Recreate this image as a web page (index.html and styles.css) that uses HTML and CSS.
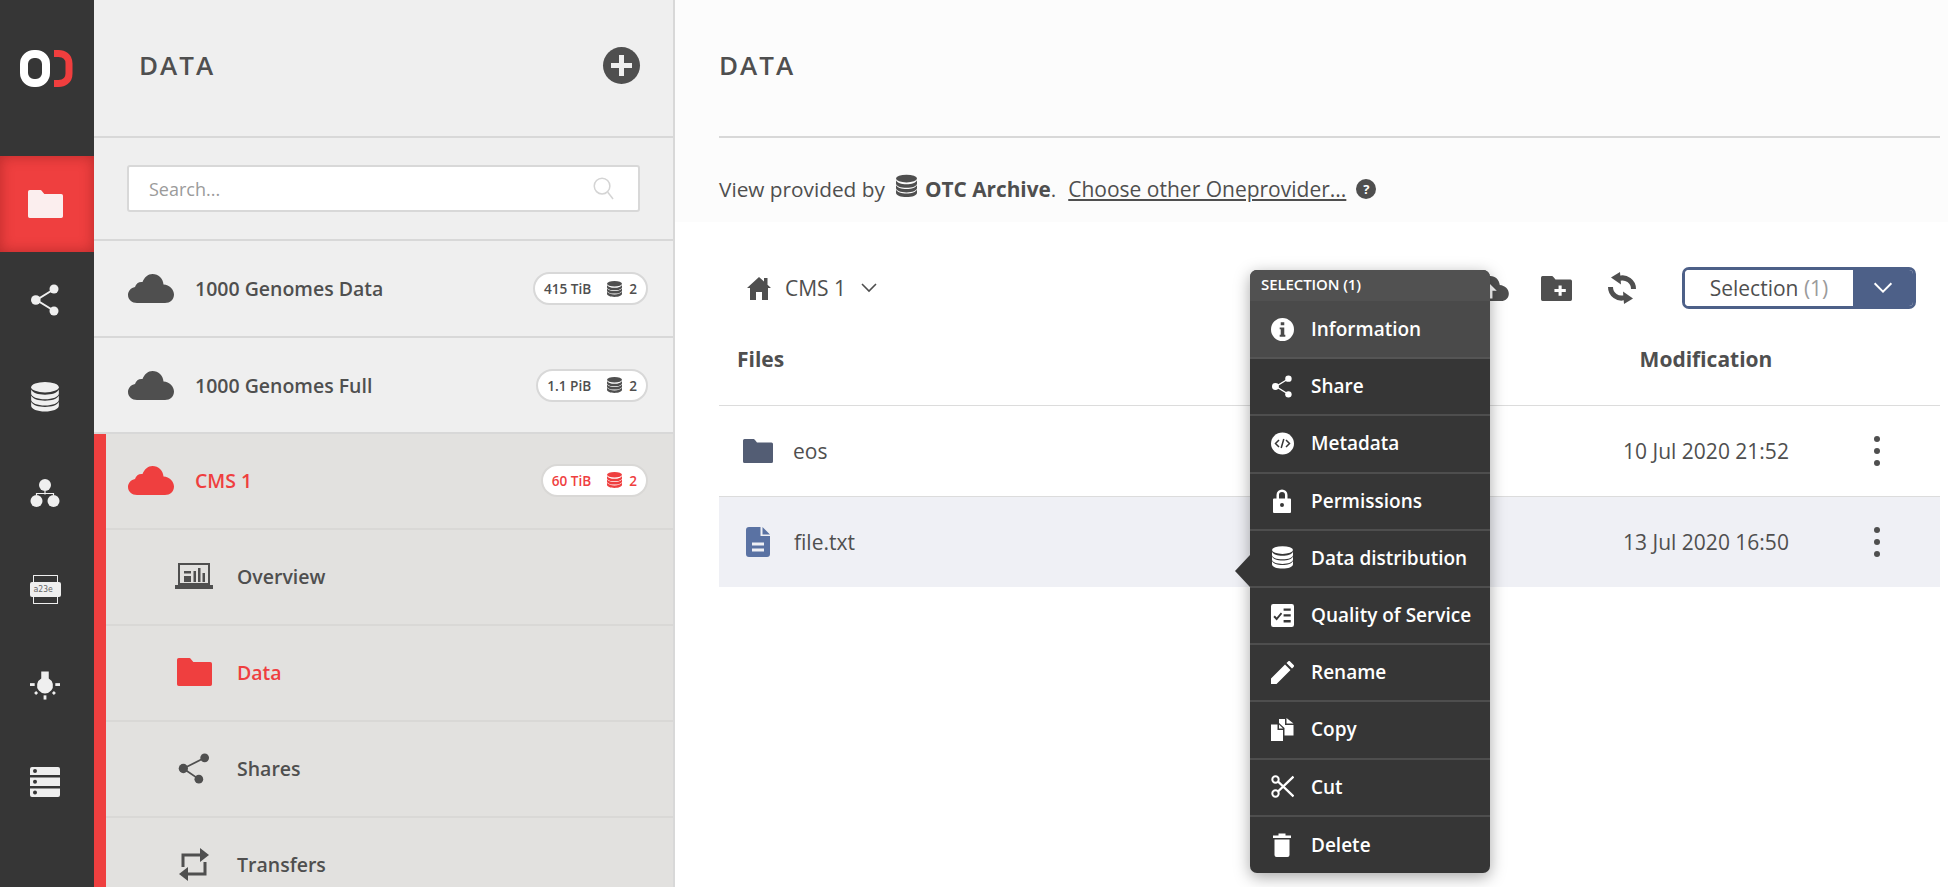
FILE: index.html
```html
<!DOCTYPE html>
<html lang="en">
  <head>
    <meta charset="UTF-8" />
    <meta name="viewport" content="width=device-width, initial-scale=1.0" />
    <title>Data</title>
    <link rel="stylesheet" href="styles.css">
  </head>
  <body>
    <!-- icon sprite -->
    <svg class="sprite" xmlns="http://www.w3.org/2000/svg">
      <symbol id="i-folder" viewBox="0 0 30 24">
        <path d="M1.5 0H10c1 0 1.600.4 2.200 1.200L14 3.400h14.500A1.500 1.500 0 0 1 30 4.900V22.500A1.500 1.500 0 0 1 28.500 24H1.500A1.500 1.500 0 0 1 0 22.500V1.500A1.500 1.500 0 0 1 1.500 0Z"/>
      </symbol>
      <symbol id="i-share" viewBox="0 0 28 32">
        <path d="M22.500 5.500 5.500 16l17 10.500" fill="none" stroke="currentColor" stroke-width="2"/>
        <circle cx="23" cy="5" r="4.500"/><circle cx="4.800" cy="16" r="4.800"/><circle cx="23" cy="27" r="4.500"/>
      </symbol>
      <symbol id="i-share-tilted" viewBox="0 0 32 32">
        <path d="M27 5 5 16l16 11" fill="none" stroke="currentColor" stroke-width="1.800"/>
        <circle cx="27" cy="5" r="4.500"/><circle cx="5" cy="16" r="4.800"/><circle cx="21" cy="27" r="4.500"/>
      </symbol>
      <symbol id="i-db" viewBox="0 0 24 26">
        <ellipse cx="12" cy="4.500" rx="12" ry="4.500"/>
        <path d="M0 6.500c1.500 3 6 4.500 12 4.500s10.500-1.500 12-4.500V10c0 3-5.500 5-12 5S0 13 0 10Z"/>
        <path d="M0 11.800c1.500 3 6 4.500 12 4.500s10.500-1.500 12-4.500v3.500c0 3-5.500 5-12 5s-12-2-12-5Z"/>
        <path d="M0 17.100c1.500 3 6 4.500 12 4.500s10.500-1.500 12-4.500v3.500c0 3-5.500 5-12 5s-12-2-12-5Z"/>
      </symbol>
      <symbol id="i-cluster" viewBox="0 0 30 28">
        <circle cx="15" cy="6" r="6"/><circle cx="6.500" cy="22" r="6"/><circle cx="23.500" cy="22" r="6"/>
        <path d="M15 12v3.500M6.500 16v-1.500h17V16" fill="none" stroke="currentColor" stroke-width="1.200"/>
      </symbol>
      <symbol id="i-bulb" viewBox="0 0 32 30">
        <path d="M12 0h8v7.500a8.500 8.500 0 1 1-8 0Z"/>
        <rect x="0" y="12.500" width="5" height="3"/><rect x="27" y="12.500" width="5" height="3"/>
        <rect x="14.500" y="25.500" width="3" height="4.500"/>
        <rect x="5" y="21.500" width="3" height="3" transform="rotate(45 6.500 23)"/>
        <rect x="24" y="21.500" width="3" height="3" transform="rotate(45 25.500 23)"/>
      </symbol>
      <symbol id="i-servers" viewBox="0 0 30 30">
        <path fill-rule="evenodd" d="M2 0h26a2 2 0 0 1 2 2v6H0V2a2 2 0 0 1 2-2Zm3 2a2 2 0 1 0 0 4 2 2 0 0 0 0-4Z"/>
        <path fill-rule="evenodd" d="M0 10.500h30v8.500H0Zm5 2.200a2 2 0 1 0 0 4 2 2 0 0 0 0-4Z"/>
        <path fill-rule="evenodd" d="M0 21.500h30V28a2 2 0 0 1-2 2H2a2 2 0 0 1-2-2Zm5 2a2 2 0 1 0 0 4 2 2 0 0 0 0-4Z"/>
      </symbol>
      <symbol id="i-cloud" viewBox="0 0 46 29">
        <path d="M9 29C4 29 0 25.500 0 21c0-4 3-7.300 7-8 1-3.500 4-5.500 7.500-5C16.500 3 20 0 24.500 0 30.500 0 35 4.500 35.500 10.500 41.500 11 46 15.500 46 20.500 46 25.500 42 29 37 29Z"/>
      </symbol>
      <symbol id="i-overview" viewBox="0 0 38 26">
        <path fill-rule="evenodd" d="M3 0h32v22H3Zm2 2v18h28V2Z"/>
        <rect x="0" y="22" width="38" height="4"/>
        <rect x="9" y="8" width="7" height="2.500"/><rect x="9" y="13" width="7" height="6"/>
        <rect x="18.500" y="8" width="2.500" height="11"/><rect x="23" y="5" width="2.500" height="14"/><rect x="27.500" y="10" width="2.500" height="9"/>
      </symbol>
      <symbol id="i-transfers" viewBox="0 0 32 35">
        <path d="M5 20V8h18M27 15v12H9" fill="none" stroke="currentColor" stroke-width="3"/>
        <path d="M22 1l9 7-9 7Z"/>
        <path d="M10 20l-9 7 9 7Z"/>
      </symbol>
      <symbol id="i-info" viewBox="0 0 22 22">
        <path fill-rule="evenodd" d="M11 0a11 11 0 1 1 0 22 11 11 0 0 1 0-22Zm-1.700 4v3h3.400V4Zm-1 5v1.800h1V16h-1v2h5.400v-2h-1V9Z"/>
      </symbol>
      <symbol id="i-meta" viewBox="0 0 23 22">
        <ellipse cx="11.500" cy="11" rx="11.500" ry="11"/>
        <path d="M8 7.500 4.500 11 8 14.500M15 7.500l3.500 3.500-3.500 3.500M12.800 6.500 10.200 15.500" fill="none" stroke="#363636" stroke-width="1.500"/>
      </symbol>
      <symbol id="i-lock" viewBox="0 0 18 24">
        <path fill-rule="evenodd" d="M3.500 9.500V6a5.500 5.500 0 0 1 11 0v3.500H17a1 1 0 0 1 1 1V23a1 1 0 0 1-1 1H1a1 1 0 0 1-1-1V10.500a1 1 0 0 1 1-1ZM6 9.500h6V6a3 3 0 0 0-6 0Zm3 4.500a2 2 0 1 0 0 4 2 2 0 0 0 0-4Z"/>
      </symbol>
      <symbol id="i-qos" viewBox="0 0 21 21">
        <path fill-rule="evenodd" d="M2 0h17a2 2 0 0 1 2 2v17a2 2 0 0 1-2 2H2a2 2 0 0 1-2-2V2a2 2 0 0 1 2-2Zm9.500 4v2.200H18V4Zm0 5.300v2.200H18V9.300Zm0 5.300v2.200H18v-2.200ZM3.500 10.500l-1.300 1.300 3 3.200 5-6L9 7.800l-3.800 4.500Z"/>
      </symbol>
      <symbol id="i-pencil" viewBox="0 0 23 23">
        <path d="M0 23v-5.500L14 3.500 19.500 9 5.500 23ZM15.500 2l1.600-1.600a1.400 1.400 0 0 1 2 0l3.500 3.500a1.400 1.400 0 0 1 0 2L21 7.500Z"/>
      </symbol>
      <symbol id="i-copy" viewBox="0 0 23 23">
        <path d="M0 6.500h6.500V12H12v11H0ZM8 6.500l4 4H8Z"/>
        <path d="M8 1h6v6h8.500v10.500H13.500V10L8 5ZM15.500 0l7 5.500h-7Z"/>
      </symbol>
      <symbol id="i-cut" viewBox="0 0 23 23">
        <g fill="none" stroke="currentColor" stroke-width="2">
          <circle cx="4.500" cy="4.500" r="3.200"/><circle cx="4.500" cy="18.500" r="3.200"/>
          <path d="M7 6.500 22.500 21.500M7 16.500 22.500 1.500" stroke-width="2.400"/>
        </g>
      </symbol>
      <symbol id="i-trash" viewBox="0 0 18 24">
        <path d="M0 2.500h5.500V0.500h7v2H18V5H0ZM1.500 6.500h15V22a2 2 0 0 1-2 2h-11a2 2 0 0 1-2-2Z"/>
      </symbol>
      <symbol id="i-home" viewBox="0 0 24 23">
        <path d="M12 0l5 4.500V1h3.500v6.700L24 11h-3v12h-6v-8H9v8H3V11H0Z"/>
      </symbol>
      <symbol id="i-upload" viewBox="0 0 46 29">
        <path d="M9 29C4 29 0 25.500 0 21c0-4 3-7.300 7-8 1-3.500 4-5.500 7.500-5C16.500 3 20 0 24.500 0 30.500 0 35 4.500 35.500 10.500 41.500 11 46 15.500 46 20.500 46 25.500 42 29 37 29Z"/>
        <path d="M23 8l9 9h-5v9h-8v-9h-5Z" fill="#fff"/>
      </symbol>
      <symbol id="i-folder-plus" viewBox="0 0 30 24">
        <path fill-rule="evenodd" d="M1.500 0H10c1 0 1.600.4 2.200 1.200L14 3.400h14.500A1.500 1.500 0 0 1 30 4.900V22.500A1.500 1.500 0 0 1 28.500 24H1.500A1.500 1.500 0 0 1 0 22.500V1.500A1.500 1.500 0 0 1 1.500 0ZM17 9v3.500h-4v2.800h4V19h3v-3.700h4v-2.800h-4V9Z"/>
      </symbol>
      <symbol id="i-sync" viewBox="0 0 32 32">
        <path d="M13 6.500A11 11 0 0 1 27.500 17" fill="none" stroke="currentColor" stroke-width="5"/>
        <path d="M14 0 5 5.500l10 7Z"/>
        <path d="M19 25.500A11 11 0 0 1 4.500 15" fill="none" stroke="currentColor" stroke-width="5"/>
        <path d="M18 32l9-5.500-10-7Z"/>
      </symbol>
      <symbol id="i-file" viewBox="0 0 24 30">
        <path fill-rule="evenodd" d="M3 0h11.500v9H24v18a3 3 0 0 1-3 3H3a3 3 0 0 1-3-3V3a3 3 0 0 1 3-3Zm3 15.500v3h12v-3Zm0 6v3h12v-3ZM16.500 0 24 7.500h-7.500Z"/>
      </symbol>
    </svg>

    <div class="app">
      <nav class="rail">
        <div class="rail-logo">
          <svg class="logo" viewBox="0 0 53 37">
            <rect x="4" y="4" width="22" height="29" rx="10" fill="none" stroke="#fff" stroke-width="8"/>
            <path d="M34 3.500h4.500c5 0 10.500 2.500 10.500 10v10c0 7.500-5.500 10-10.500 10H34" fill="none" stroke="#f03e3e" stroke-width="7"/>
          </svg>
        </div>
        <a class="rail-item active"><svg class="rail-icon folder"><use href="#i-folder"/></svg></a>
        <a class="rail-item"><svg class="rail-icon share"><use href="#i-share"/></svg></a>
        <a class="rail-item"><svg class="rail-icon db"><use href="#i-db"/></svg></a>
        <a class="rail-item"><svg class="rail-icon cluster"><use href="#i-cluster"/></svg></a>
        <a class="rail-item">
          <div class="token">
            <span class="token-clip"></span>
            <span class="token-body">a23e</span>
            <span class="token-clip bottom"></span>
          </div>
        </a>
        <a class="rail-item"><svg class="rail-icon bulb"><use href="#i-bulb"/></svg></a>
        <a class="rail-item"><svg class="rail-icon servers"><use href="#i-servers"/></svg></a>
      </nav>

      <aside class="sidebar">
        <header class="side-head">
          <h1 class="heading">DATA</h1>
          <span class="add-btn"></span>
        </header>
        <div class="search-row">
          <div class="search-box">
            <span>Search...</span>
            <svg class="search-icon" viewBox="0 0 22 24"><circle cx="9.500" cy="9.500" r="8.200"/><path d="m15.500 16 5.500 7"/></svg>
          </div>
        </div>
        <div class="space-row">
          <svg class="cloud"><use href="#i-cloud"/></svg>
          <span class="space-name">1000 Genomes Data</span>
          <span class="pill"><span>415 TiB</span><svg class="pill-db"><use href="#i-db"/></svg><span>2</span></span>
        </div>
        <div class="space-row">
          <svg class="cloud"><use href="#i-cloud"/></svg>
          <span class="space-name">1000 Genomes Full</span>
          <span class="pill"><span>1.1 PiB</span><svg class="pill-db"><use href="#i-db"/></svg><span>2</span></span>
        </div>
        <div class="space-open">
          <div class="space-row current">
            <svg class="cloud"><use href="#i-cloud"/></svg>
            <span class="space-name">CMS 1</span>
            <span class="pill"><span>60 TiB</span><svg class="pill-db"><use href="#i-db"/></svg><span>2</span></span>
          </div>
          <div class="sub-row"><span class="sub-cell"><svg class="sub-icon overview"><use href="#i-overview"/></svg></span>Overview</div>
          <div class="sub-row current"><span class="sub-cell"><svg class="sub-icon data"><use href="#i-folder"/></svg></span>Data</div>
          <div class="sub-row"><span class="sub-cell"><svg class="sub-icon shares"><use href="#i-share-tilted"/></svg></span>Shares</div>
          <div class="sub-row"><span class="sub-cell"><svg class="sub-icon transfers"><use href="#i-transfers"/></svg></span>Transfers</div>
        </div>
      </aside>

      <main class="content">
        <section class="content-top">
          <h2 class="heading title-row">DATA</h2>
          <p class="provider">
            <span>View provided by</span>
            <svg class="provider-db"><use href="#i-db"/></svg>
            <span><b>OTC Archive</b>.</span>
            <a class="provider-link">Choose other Oneprovider...</a>
            <span class="help">?</span>
          </p>
        </section>

        <section class="browser">
          <div class="toolbar">
            <div class="crumb">
              <svg class="home"><use href="#i-home"/></svg>
              <span>CMS 1</span>
              <svg class="chevron" viewBox="0 0 16 10"><path d="m1 1 7 7 7-7"/></svg>
            </div>
            <div class="tools">
              <svg class="tool upload"><use href="#i-upload"/></svg>
              <svg class="tool new-dir"><use href="#i-folder-plus"/></svg>
              <svg class="tool sync"><use href="#i-sync"/></svg>
              <div class="select-btn">
                <span class="select-label">Selection <em>(1)</em></span>
                <span class="select-arrow"><svg class="chevron light" viewBox="0 0 16 10"><path d="m1 1 7 7 7-7"/></svg></span>
              </div>
            </div>
          </div>

          <div class="file-row head">
            <span class="file-name">Files</span>
            <span class="file-date">Modification</span>
            <span></span>
          </div>
          <div class="file-row">
            <span class="file-name"><svg class="file-icon dir"><use href="#i-folder"/></svg>eos</span>
            <span class="file-date">10 Jul 2020 21:52</span>
            <span class="dots"><i></i><i></i><i></i></span>
          </div>
          <div class="file-row picked">
            <span class="file-name"><svg class="file-icon doc"><use href="#i-file"/></svg>file.txt</span>
            <span class="file-date">13 Jul 2020 16:50</span>
            <span class="dots"><i></i><i></i><i></i></span>
          </div>
        </section>
      </main>
    </div>

    <!-- selection context menu -->
    <div class="menu">
      <div class="menu-title">SELECTION (1)</div>
      <div class="menu-item hover"><span class="menu-cell"><svg class="mi w22"><use href="#i-info"/></svg></span>Information</div>
      <div class="menu-item"><span class="menu-cell"><svg class="mi share"><use href="#i-share"/></svg></span>Share</div>
      <div class="menu-item"><span class="menu-cell"><svg class="mi w22"><use href="#i-meta"/></svg></span>Metadata</div>
      <div class="menu-item"><span class="menu-cell"><svg class="mi lock"><use href="#i-lock"/></svg></span>Permissions</div>
      <div class="menu-item"><span class="menu-cell"><svg class="mi db"><use href="#i-db"/></svg></span>Data distribution</div>
      <div class="menu-item"><span class="menu-cell"><svg class="mi w22"><use href="#i-qos"/></svg></span>Quality of Service</div>
      <div class="menu-item"><span class="menu-cell"><svg class="mi w22"><use href="#i-pencil"/></svg></span>Rename</div>
      <div class="menu-item"><span class="menu-cell"><svg class="mi w22"><use href="#i-copy"/></svg></span>Copy</div>
      <div class="menu-item"><span class="menu-cell"><svg class="mi w22"><use href="#i-cut"/></svg></span>Cut</div>
      <div class="menu-item"><span class="menu-cell"><svg class="mi lock"><use href="#i-trash"/></svg></span>Delete</div>
    </div>
  </body>
</html>
```

FILE: styles.css
```css
* {
  box-sizing: border-box;
}

body {
  margin: 0;
  height: 887px;
  overflow: hidden;
  font-family: "Open Sans", "Liberation Sans", sans-serif;
  color: #4f4f4f;
  background: #fff;
}

svg {
  fill: currentColor;
}

.sprite {
  display: none;
}

.app {
  display: flex;
  height: 887px;
  overflow: hidden;
}

/* dark icon rail */
.rail {
  flex: 0 0 94px;
  background: #363636;
  color: #efefef;
}

.rail-logo {
  height: 156px;
  padding: 50px 0 0 20px;
}

.logo {
  display: block;
  width: 53px;
  height: 37px;
}

.rail-item {
  display: flex;
  align-items: center;
  justify-content: center;
  height: 96.3px;
  padding-right: 4px;
}

.rail-item.active {
  background: #ef3f3f;
  color: #fbeeee;
  box-shadow: inset 0 0 14px rgba(120, 20, 20, 0.45);
}

.rail-icon.folder { width: 35px; height: 28px; }
.rail-icon.share { width: 28px; height: 32px; }
.rail-icon.db { width: 28px; height: 30px; }
.rail-icon.cluster { width: 30px; height: 28px; }
.rail-icon.bulb { width: 30px; height: 29px; }
.rail-icon.servers { width: 30px; height: 30px; }

.token {
  display: flex;
  flex-direction: column;
  align-items: center;
  width: 31px;
}

.token-clip {
  width: 25px;
  height: 7px;
  border: 1.5px solid #efefef;
  border-bottom: 0;
  border-radius: 1px 1px 0 0;
}

.token-clip.bottom {
  border: 1.5px solid #efefef;
  border-top: 0;
  border-radius: 0 0 1px 1px;
}

.token-body {
  width: 31px;
  height: 15px;
  background: #efefef;
  color: #666;
  border-radius: 2px;
  font: 8px/15px "DejaVu Sans Mono", monospace;
  padding-left: 4px;
}

/* middle column */
.sidebar {
  flex: 0 0 581px;
  background: #efefef;
  border-right: 2px solid #d8d8d8;
}

.heading {
  margin: 0;
  font-size: 26px;
  font-weight: 600;
  letter-spacing: 2px;
  color: #4f4f4f;
}

.side-head {
  display: flex;
  align-items: center;
  justify-content: space-between;
  height: 138px;
  padding: 0 33px 6px 45px;
  border-bottom: 2px solid #d8d8d8;
}

.add-btn {
  position: relative;
  width: 37px;
  height: 37px;
  border-radius: 50%;
  background: #4f4f4f;
}

.add-btn::before,
.add-btn::after {
  content: "";
  position: absolute;
  background: #efefef;
}

.add-btn::before { left: 16px; top: 8px; width: 5px; height: 21px; }
.add-btn::after { left: 8px; top: 16px; width: 21px; height: 5px; }

.search-row {
  height: 103px;
  padding: 27px 33px 0 33px;
  border-bottom: 2px solid #d8d8d8;
}

.search-box {
  display: flex;
  align-items: center;
  justify-content: space-between;
  height: 47px;
  padding: 0 24px 0 20px;
  background: #fff;
  border: 2px solid #d8d8d8;
  border-radius: 3px;
  font-size: 18px;
  color: #9b9b9b;
}

.search-icon {
  width: 21px;
  height: 23px;
  fill: none;
  stroke: #d4d4d4;
  stroke-width: 1.6;
}

.space-row {
  display: flex;
  align-items: center;
  height: 97px;
  padding: 0 25px 0 34px;
  border-bottom: 2px solid #d8d8d8;
}

.space-row + .space-row {
  height: 96px;
}

.cloud {
  width: 46px;
  height: 29px;
  margin-right: 21px;
  flex: none;
}

.space-name {
  flex: 1;
  font-size: 19.5px;
  font-weight: 600;
}

.pill {
  display: flex;
  align-items: center;
  height: 33px;
  padding: 0 9px;
  background: #fff;
  border: 2px solid #d8d8d8;
  border-radius: 17px;
  font-size: 13.6px;
  font-weight: 600;
}

.pill-db {
  width: 15px;
  height: 18px;
  margin: 0 7px 0 16px;
}

.space-open {
  background: #e2e1df;
  border-left: 12px solid #ef3f3f;
}

.space-open .space-row {
  height: 96px;
  padding-left: 22px;
  padding-bottom: 2px;
  border-bottom-color: #d9d8d6;
}

.space-row.current {
  color: #ef3f3f;
}

.space-row.current .pill {
  border-color: #d9d8d6;
}

.sub-row {
  display: flex;
  align-items: center;
  height: 96px;
  padding: 0 0 2px 69px;
  font-size: 19.5px;
  font-weight: 600;
  border-bottom: 2px solid #d9d8d6;
}

.sub-row.current {
  color: #ef3f3f;
}

.sub-cell {
  display: flex;
  justify-content: center;
  width: 38px;
  margin-right: 24px;
}

.sub-icon.overview { width: 38px; height: 26px; }
.sub-icon.data { width: 35px; height: 28px; }
.sub-icon.shares { width: 32px; height: 31px; }
.sub-icon.transfers { width: 32px; height: 35px; }

/* right part */
.content {
  flex: 1;
  min-width: 0;
}

.content-top {
  height: 222px;
  padding: 0 8px 0 44px;
  background: #fcfcfc;
}

.title-row {
  display: flex;
  align-items: center;
  height: 138px;
  padding-bottom: 6px;
  border-bottom: 2px solid #d8d8d8;
}

.provider {
  display: flex;
  align-items: center;
  margin: 31px 0 0;
  height: 40px;
  font-size: 20.8px;
  white-space: nowrap;
}

.provider-db {
  width: 21px;
  height: 24px;
  margin: -6px 8px 0 11px;
}

.provider-link {
  margin-left: 12px;
  font-size: 21px;
  text-decoration: underline;
}

.help {
  width: 20px;
  height: 20px;
  margin-left: 10px;
  border-radius: 50%;
  background: #4f4f4f;
  color: #fff;
  font-size: 13px;
  font-weight: 700;
  line-height: 20px;
  text-align: center;
}

.browser {
  padding: 45px 8px 0 44px;
}

.toolbar {
  display: flex;
  align-items: center;
  justify-content: space-between;
  height: 42px;
  padding-right: 24px;
}

.crumb {
  display: flex;
  align-items: center;
  padding-left: 28px;
  font-size: 21px;
}

.home {
  width: 24px;
  height: 23px;
  margin-right: 14px;
}

.chevron {
  width: 16px;
  height: 10px;
  margin-left: 15px;
  fill: none;
  stroke: #4f4f4f;
  stroke-width: 1.6;
}

.chevron.light {
  width: 20px;
  height: 12px;
  margin: 0;
  stroke: #fff;
}

.tools {
  display: flex;
  align-items: center;
}

.tool.upload { width: 40px; height: 25px; margin-right: 32px; }
.tool.new-dir { width: 31px; height: 25px; margin-right: 34px; }
.tool.sync { width: 32px; height: 32px; margin-right: 44px; }

.select-btn {
  display: flex;
  width: 234px;
  height: 42px;
  border: 3px solid #4d6088;
  border-radius: 7px;
  overflow: hidden;
}

.select-label {
  width: 168px;
  font-size: 21px;
  line-height: 36px;
  text-align: center;
  background: #fff;
}

.select-label em {
  font-style: normal;
  color: #9b9b9b;
}

.select-arrow {
  display: flex;
  flex: 1;
  align-items: center;
  justify-content: center;
  background: #4d6088;
}

.file-row {
  display: grid;
  grid-template-columns: 1fr 216px 126px;
  align-items: center;
  height: 91px;
  border-bottom: 1px solid #dcdcdc;
  font-size: 21px;
}

.file-row.head {
  height: 97px;
  padding-top: 4px;
  font-weight: 700;
}

.file-row.picked {
  height: 90px;
  background: #eff0f5;
  border-bottom: 0;
}

.file-name {
  display: flex;
  align-items: center;
  padding-left: 18px;
}

.file-date {
  text-align: center;
  white-space: nowrap;
}

.file-icon {
  flex: none;
  margin-right: 20px;
}

.file-icon.dir {
  width: 30px;
  height: 24px;
  margin-left: 6px;
  color: #535d74;
}

.file-icon.doc {
  width: 24px;
  height: 30px;
  margin-left: 9px;
  margin-right: 24px;
  color: #5a72a3;
}

.dots {
  display: flex;
  flex-direction: column;
  align-items: center;
  gap: 6px;
}

.dots i {
  width: 6px;
  height: 6px;
  border-radius: 50%;
  background: #4f4f4f;
}

.menu {
  position: absolute;
  left: 1250px;
  top: 270px;
  width: 240px;
  height: 603px;
  background: #363636;
  border-radius: 7px;
  box-shadow: 0 4px 16px rgba(0, 0, 0, 0.35);
  color: #fff;
}

.menu::before {
  content: "";
  position: absolute;
  left: -15px;
  top: 285px;
  border-top: 16px solid transparent;
  border-bottom: 16px solid transparent;
  border-right: 15px solid #363636;
}

.menu-title {
  height: 32px;
  padding-left: 11px;
  background: #515151;
  border-radius: 7px 7px 0 0;
  border-bottom: 1px solid #4a4a4a;
  font-size: 15px;
  font-weight: 600;
  line-height: 29px;
  letter-spacing: -0.1px;
}

.menu-item {
  display: flex;
  align-items: center;
  height: 57.2px;
  padding-bottom: 1px;
  border-bottom: 2px solid #4e4e4e;
  font-size: 19px;
  font-weight: 600;
}

.menu-item:last-child {
  border-bottom: 0;
}

.menu-item.hover {
  background: #4a4a4a;
  border-bottom-color: #555;
}

.menu-cell {
  display: flex;
  justify-content: center;
  width: 24px;
  margin: 0 17px 0 20px;
}

.mi.w22 { width: 23px; height: 23px; }
.mi.share { width: 20px; height: 23px; }
.mi.lock { width: 18px; height: 24px; }
.mi.db { width: 21px; height: 23px; }
```
